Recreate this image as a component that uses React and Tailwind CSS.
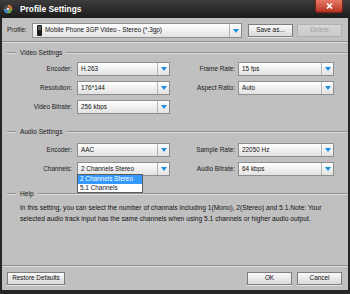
import React from "react";

function Arrow() {
  return (
    <div className="flex h-full w-[12px] shrink-0 items-center justify-center border-l border-[#b4b4b4]">
      <svg width="6" height="4" viewBox="0 0 6 4">
        <path d="M0 0h6L3 4z" fill="#1d8fe1" />
      </svg>
    </div>
  );
}

function Combo({ value, className = "", icon, children }) {
  return (
    <div className={`relative flex h-[14px] items-center border border-[#8e8e8e] bg-gradient-to-b from-white to-[#e2e2e2] ${className}`}>
      {icon}
      <span className="flex-1 truncate pl-[3px] text-[6.4px] leading-none text-[#111]">{value}</span>
      <Arrow />
      {children}
    </div>
  );
}

function Btn({ label, className = "", disabled }) {
  return (
    <div
      className={`flex h-[13px] items-center justify-center border text-[6.4px] leading-none ${
        disabled
          ? "border-[#b2b2b2] bg-gradient-to-b from-[#d6d6d6] to-[#cacaca] text-[#a2a2a2]"
          : "border-[#7e7e7e] bg-gradient-to-b from-[#fafafa] to-[#d9d9d9] text-[#111] shadow-[0_1px_0_#e6e6e6]"
      } ${className}`}
    >
      {label}
    </div>
  );
}

function Etched({ className = "" }) {
  return <div className={`h-[2px] border-t border-b border-t-[#8f8f8f] border-b-[#dedede] ${className}`} />;
}

function GroupHead({ title }) {
  return (
    <div className="flex h-[10px] items-center">
      <Etched className="ml-[5px] w-[9px]" />
      <span className="px-[4px] text-[6.6px] leading-none text-[#1a1a1a]">{title}</span>
      <Etched className="mr-[1px] flex-1" />
    </div>
  );
}

function Row({ l1, v1, l2, v2, extra }) {
  return (
    <div className="flex h-[14px] items-center">
      <span className="w-[70px] text-right text-[6.4px] leading-none text-[#1a1a1a]">{l1}</span>
      <Combo value={v1} className="ml-[5px] w-[93px]">{extra}</Combo>
      <span className="w-[65px] text-right text-[6.4px] leading-none text-[#1a1a1a]">{l2}</span>
      <Combo value={v2} className="ml-[3px] w-[96px]" />
    </div>
  );
}

export default function App() {
  const dropdown = (
    <div className="absolute left-[-1px] top-full z-10 mt-[-1px] w-[66px] border border-[#5c5c5c] bg-white text-[6.4px] leading-none">
      <div className="flex h-[8.5px] items-center bg-[#3399ff] pl-[2px] text-white">2 Channels Stereo</div>
      <div className="flex h-[8.5px] items-center pl-[2px] text-[#111]">5.1 Channels</div>
    </div>
  );

  return (
    <div className="flex h-[294px] w-[350px] flex-col bg-[#262626] font-['Liberation_Sans',Arial,sans-serif]">
      {/* title bar */}
      <div className="flex h-[18px] shrink-0 items-start bg-gradient-to-b from-[#3c3c3c] to-[#1c1c1c]">
        <svg width="10" height="10" viewBox="0 0 10 10" className="ml-[3px] mt-[4px]">
          <circle cx="5" cy="5" r="4.5" fill="#4a4a4a" />
          <path d="M5 0.8A4.2 4.2 0 0 1 9.2 5H7.2A2.2 2.2 0 0 0 5 2.8z" fill="#e8742a" />
          <path d="M9.2 5A4.2 4.2 0 0 1 5 9.2V7.2A2.2 2.2 0 0 0 7.2 5z" fill="#6db33f" />
          <path d="M5 9.2A4.2 4.2 0 0 1 0.8 5h2A2.2 2.2 0 0 0 5 7.2z" fill="#3a8fd6" />
          <circle cx="5" cy="5" r="1.5" fill="#d8d8d8" />
        </svg>
        <span className="ml-[7px] mt-[5px] text-[8.4px] font-bold leading-none text-white">Profile Settings</span>
        <div className="ml-auto mr-[7px] flex h-[13px] w-[28px] items-center justify-center rounded-b-[3px] border border-t-0 border-[#7a2418] bg-gradient-to-b from-[#e77a66] to-[#b6301e]">
          <svg width="7" height="6" viewBox="0 0 7 6">
            <path d="M1 0.5l5 5M6 0.5l-5 5" stroke="#fff" strokeWidth="1.6" />
          </svg>
        </div>
      </div>

      {/* body */}
      <div className="mx-[2px] mb-[4px] flex flex-1 flex-col bg-[#c0c0c0]">
        <div className="mt-[5px] flex h-[15px] items-center">
          <span className="ml-[5px] w-[25px] text-[6.4px] leading-none text-[#1a1a1a]">Profile:</span>
          <Combo
            value="Mobile Phone 3GP Video - Stereo (*.3gp)"
            className="h-[15px] w-[210px]"
            icon={
              <div className="ml-[4px] flex h-[11px] w-[5px] items-start justify-center rounded-[1px] bg-[#1b1b1b] pt-[1px]">
                <div className="h-[4px] w-[3px] bg-[#5a5a5a]" />
              </div>
            }
          />
          <Btn label="Save as..." className="ml-[6px] w-[45px]" />
          <Btn label="Delete" disabled className="ml-[4px] w-[45px]" />
        </div>
        <Etched className="mt-[3px]" />

        <div className="mt-[5px]">
          <GroupHead title="Video Settings" />
        </div>
        <div className="mt-[4px] flex flex-col gap-[5px]">
          <Row l1="Encoder:" v1="H.263" l2="Frame Rate:" v2="15 fps" />
          <Row l1="Resolution:" v1="176*144" l2="Aspect Ratio:" v2="Auto" />
          <div className="flex h-[14px] items-center">
            <span className="w-[70px] text-right text-[6.4px] leading-none text-[#1a1a1a]">Video Bitrate:</span>
            <Combo value="256 kbps" className="ml-[5px] w-[93px]" />
          </div>
        </div>

        <div className="mt-[13px]">
          <GroupHead title="Audio Settings" />
        </div>
        <div className="mt-[6px] flex flex-col gap-[5px]">
          <Row l1="Encoder:" v1="AAC" l2="Sample Rate:" v2="22050 Hz" />
          <Row l1="Channels:" v1="2 Channels Stereo" l2="Audio Bitrate:" v2="64 kbps" extra={dropdown} />
        </div>

        <div className="mt-[13px]">
          <GroupHead title="Help" />
        </div>
        <p className="ml-[18px] mt-[3px] whitespace-nowrap text-[6.7px] leading-[11px] text-[#111]">
          In this setting, you can select the number of channals including 1(Mono), 2(Stereo) and 5.1.Note: Your
          <br />
          selected audio track input has the same channels when using 5.1 channels or higher audio output.
        </p>

        <div className="mt-auto">
          <Etched />
          <div className="flex items-center pb-[5px] pt-[5px]">
            <Btn label="Restore Defaults" className="ml-[5px] w-[58px]" />
            <Btn label="OK" className="ml-auto w-[45px]" />
            <Btn label="Cancel" className="ml-[5px] mr-[6px] w-[45px]" />
          </div>
        </div>
      </div>
    </div>
  );
}
